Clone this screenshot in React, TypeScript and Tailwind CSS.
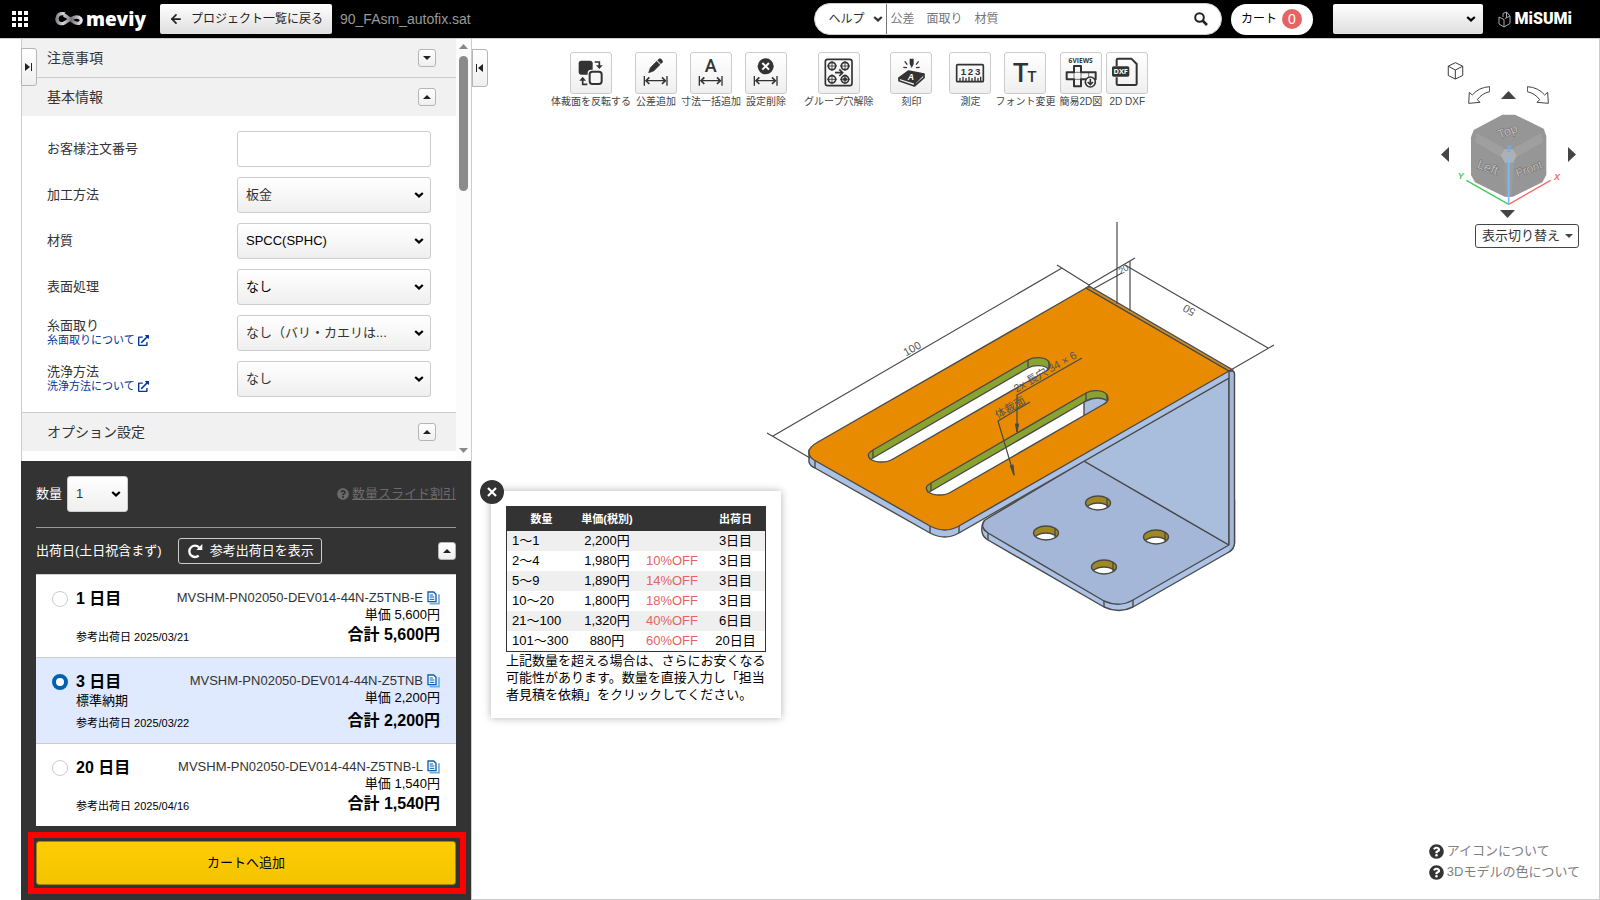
import React from 'react'
import { ArrowLeft } from 'lucide-react'
import { FaExternalLinkAlt, FaQuestionCircle } from 'react-icons/fa'

type IconProps = { className?: string }

const Chevron: React.FC<IconProps> = ({ className }) => (
  <svg viewBox="0 0 10 6" className={`h-[6px] w-[10px] pointer-events-none ${className ?? ''}`} aria-hidden="true">
    <path d="M1.2 1 5 4.4 8.8 1" fill="none" stroke="currentColor" strokeWidth="2.2" />
  </svg>
)

const ToggleButton: React.FC<{ open: boolean; label: string }> = ({ open, label }) => (
  <button
    aria-label={label}
    aria-expanded={open}
    className="flex h-[18px] w-[18px] items-center justify-center rounded-[3px] border border-[#b5b5b5] bg-linear-to-b from-white to-[#efefef]"
  >
    <svg viewBox="0 0 8 4" className="h-1 w-2">
      <path d={open ? 'M0 4 4 0 8 4Z' : 'M0 0 4 4 8 0Z'} fill="#222" />
    </svg>
  </button>
)

/* ---------- Header ---------- */

const MeviyLogo: React.FC = () => (
  <a href="#" className="flex w-[91px] items-center gap-[3px] text-white" aria-label="meviy">
    <svg viewBox="0 0 84 42" className="h-[14px] w-[28px]">
      <defs>
        <linearGradient id="mark" x1="0" x2="1" y1="0" y2="0">
          <stop offset="0" stopColor="#8b8790" />
          <stop offset="0.25" stopColor="#d8d6da" />
          <stop offset="0.6" stopColor="#77737c" />
          <stop offset="1" stopColor="#e8e6ea" />
        </linearGradient>
      </defs>
      <path
        d="M30 6C16 1 5 9 6 22C7 34 18 38 28 33C42 26 50 15 66 15C75 15 81 21 78 28C75 36 64 36 56 30C46 23 38 12 26 9"
        fill="none"
        stroke="url(#mark)"
        strokeWidth="10"
      />
    </svg>
    <span className="font-['Open_Sans'] text-[19px] leading-[24px] font-extrabold">meviy</span>
  </a>
)

const Header: React.FC = () => (
  <header className="flex h-[39px] shrink-0 items-center border-b border-[#ccc] bg-black pl-3 pr-7">
    <button aria-label="メニュー" className="mr-[27px] grid grid-cols-3 gap-[2px]">
      {Array.from({ length: 9 }, (_, i) => (
        <span key={i} className="h-[4px] w-[4px] bg-white" />
      ))}
    </button>
    <MeviyLogo />
    <button className="ml-[14px] flex h-[30px] w-[172px] items-center gap-2 rounded-[2px] bg-linear-to-b from-white to-[#dedede] pl-[9px] text-[12px] text-[#222]">
      <ArrowLeft className="h-[14px] w-[14px]" strokeWidth={3} />
      プロジェクト一覧に戻る
    </button>
    <span className="ml-2 text-[14px] text-[#999]">90_FAsm_autofix.sat</span>

    <div className="ml-auto flex items-center">
      <form className="flex h-8 w-[408px] items-center rounded-full border border-[#ccc] bg-white pr-[13px]">
        <button type="button" className="flex h-full w-[72px] items-center gap-[8px] border-r border-[#777] pl-[14px] text-[12px] text-[#333]">
          ヘルプ
          <Chevron />
        </button>
        <input
          aria-label="検索"
          placeholder="公差　面取り　材質"
          className="min-w-0 flex-1 pl-1 text-[12px] outline-none placeholder:text-[#757575]"
        />
        <button type="button" aria-label="検索する">
          <svg viewBox="0 0 14 14" className="h-[14px] w-[14px] text-[#222]" fill="none" stroke="currentColor">
            <circle cx="5.500" cy="5.500" r="4.300" strokeWidth="2" />
            <path d="M8.500 8.500 13 13" strokeWidth="2.600" />
          </svg>
        </button>
      </form>
      <a href="#" className="ml-[9px] flex h-[31px] w-[82px] items-center justify-center gap-[5px] rounded-full bg-white text-[12px] text-black">
        カート
        <span className="flex h-5 w-5 items-center justify-center rounded-full bg-[#e56363] text-[14px] text-white">0</span>
      </a>
      <div className="relative ml-5">
        <select
          aria-label="アカウント"
          className="h-[30px] w-[150px] appearance-none rounded-[2px] bg-linear-to-b from-white to-[#dedede]"
        />
        <Chevron className="absolute right-[7px] top-3 text-black" />
      </div>
      <a href="#" className="ml-[15px] flex items-center gap-1 text-white" aria-label="MiSUMi">
        <svg viewBox="0 0 26 34" className="h-[17px] w-[13px]" fill="none" stroke="#aaa" strokeWidth="2">
          <path d="M2 12 12 17V32L2 26ZM12 32 24 25V10L14 15M10 12V5L17 2V14M17 2 24 10" />
        </svg>
        <span className="font-[Roboto] text-[16px] leading-5 font-black">MiSUMi</span>
      </a>
    </div>
  </header>
)

/* ---------- Side panel ---------- */

const SectionHeader: React.FC<{ title: string; open: boolean }> = ({ title, open }) => (
  <div className="flex h-[38px] shrink-0 items-center justify-between bg-[#f1f1f1] pl-[25px] pr-5">
    <h2 className="text-[14px]">{title}</h2>
    <ToggleButton open={open} label={title} />
  </div>
)

const fields = [
  { id: 'method', label: '加工方法', value: '板金' },
  { id: 'material', label: '材質', value: 'SPCC(SPHC)', active: true },
  { id: 'surface', label: '表面処理', value: 'なし', active: true },
  { id: 'chamfer', label: '糸面取り', value: 'なし（バリ・カエリは...', link: '糸面取りについて' },
  { id: 'wash', label: '洗浄方法', value: 'なし', link: '洗浄方法について' },
]

const BasicInfo: React.FC = () => (
  <div className="flex flex-col gap-[10px] border-b border-[#ccc] py-[15px] pl-[25px] pr-[25px] text-[13px]">
    <div className="flex h-9 items-center justify-between">
      <label htmlFor="order-no">お客様注文番号</label>
      <input id="order-no" className="h-9 w-[194px] rounded-[3px] border border-[#ccc] px-2 outline-none" />
    </div>
    {fields.map((field) => (
      <div key={field.id} className="flex h-9 items-center justify-between">
        <div className="flex flex-col pb-[2px]">
          <label htmlFor={field.id} className="leading-[17px]">{field.label}</label>
          {field.link && (
            <a href="#" className="flex items-center gap-[3px] text-[11px] leading-[13px] text-[#00359c]">
              {field.link}
              <FaExternalLinkAlt className="h-[11px] w-[11px]" />
            </a>
          )}
        </div>
        <div className="relative">
          <select
            id={field.id}
            className={`h-9 w-[194px] appearance-none rounded-[3px] border border-[#ccc] bg-linear-to-b from-white to-[#efefef] pl-2 ${
              field.active ? 'text-black' : 'text-[#333]'
            }`}
          >
            <option>{field.value}</option>
          </select>
          <Chevron className="absolute right-[7px] top-[15px] text-black" />
        </div>
      </div>
    ))}
  </div>
)

const CopyIcon: React.FC = () => (
  <svg viewBox="0 0 39 42" className="h-[14px] w-[13px]" fill="none">
    <path d="M8 38H36V10" stroke="#7ba8d6" strokeWidth="5" />
    <path d="M3 3H20L27 10V32H3Z" fill="#fff" stroke="#0a5fb0" strokeWidth="4" />
    <path d="M8 12H18M8 18H22M8 25H22" stroke="#0a5fb0" strokeWidth="3" />
  </svg>
)

const plans = [
  { days: '1', code: 'MVSHM-PN02050-DEV014-44N-Z5TNB-E', price: '5,600', date: '2025/03/21' },
  { days: '3', code: 'MVSHM-PN02050-DEV014-44N-Z5TNB', price: '2,200', date: '2025/03/22', note: '標準納期' },
  { days: '20', code: 'MVSHM-PN02050-DEV014-44N-Z5TNB-L', price: '1,540', date: '2025/04/16' },
]

const OrderPanel: React.FC = () => (
  <div className="flex shrink-0 flex-col bg-[#333] px-[15px] pt-[15px] pb-[6px] text-[13px] text-white">
    <div className="flex items-center border-b border-[#999] pb-[15px]">
      <label htmlFor="qty" className="mr-[5px]">数量</label>
      <div className="relative">
        <select
          id="qty"
          className="h-9 w-[61px] appearance-none rounded-[3px] border border-[#ccc] bg-linear-to-b from-white to-[#efefef] pl-2 text-[#333]"
        >
          <option>1</option>
        </select>
        <Chevron className="absolute right-[7px] top-[15px] text-black" />
      </div>
      <a href="#" className="ml-auto flex items-center gap-[3px] text-[#6b6b6b]">
        <FaQuestionCircle className="h-3 w-3" />
        <span className="underline">数量スライド割引</span>
      </a>
    </div>

    <div className="flex items-center py-[10px]">
      <span>出荷日(土日祝含まず)</span>
      <button className="ml-4 flex h-[26px] w-[144px] items-center gap-[7px] rounded-[3px] border border-[#ccc] pl-2">
        <svg viewBox="0 0 48 48" className="h-4 w-4">
          <path d="M35 38A17 17 0 1 1 36 13" fill="none" stroke="#fff" strokeWidth="7" />
          <path d="M46 3V21H28Z" fill="#fff" />
        </svg>
        参考出荷日を表示
      </button>
      <div className="ml-auto flex">
        <ToggleButton open label="出荷日" />
      </div>
    </div>

    <div className="text-black">
      {plans.map((plan) => (
        <label
          key={plan.days}
          className="flex gap-2 border-t border-[#ccc] bg-white px-4 pt-[14px] pb-[11px] has-checked:bg-[#dfe9ff]"
        >
          <input
            type="radio"
            name="plan"
            defaultChecked={plan.days === '3'}
            className="mt-0.5 h-4 w-4 shrink-0 appearance-none rounded-full border border-[#ccc] bg-white checked:border-4 checked:border-[#0062b1]"
          />
          <span className="flex min-w-0 flex-1 flex-col whitespace-nowrap">
            <b className="text-[16px] leading-5">{plan.days} 日目</b>
            {plan.note && <span className="mb-[6px] leading-[17px]">{plan.note}</span>}
            <span className="mt-auto text-[11px] leading-[17px]">参考出荷日 {plan.date}</span>
          </span>
          <span className="flex flex-col items-end">
            <span className="flex items-center gap-1 leading-[17px] text-[#333]">
              {plan.code}
              <CopyIcon />
            </span>
            <span className="leading-[17px]">単価 {plan.price}円</span>
            <b className="mt-auto pt-px text-[16px] leading-[22px]">合計 {plan.price}円</b>
          </span>
        </label>
      ))}
    </div>

    <div className="-mr-[10px] -ml-2 mt-[6px] border-6 border-[#f00] py-[3px] pr-1 pl-[2px]">
      <button className="h-11 w-full rounded-[3px] border border-[#a48300] bg-linear-to-b from-[#ffcd05] to-[#f4c300] text-[13px] text-black">
        カートへ追加
      </button>
    </div>
  </div>
)

const Scrollbar: React.FC = () => (
  <div className="flex w-[15px] shrink-0 flex-col items-center bg-[#fbfbfb] pt-[5px] pb-2">
    <svg viewBox="0 0 9 5" className="mb-[7px] h-[5px] w-[9px]">
      <path d="M0 5 4.5 0 9 5Z" fill="#888" />
    </svg>
    <div className="h-[135px] w-[9px] rounded-full bg-[#8b8b8b]" />
    <svg viewBox="0 0 9 5" className="mt-auto h-[5px] w-[9px]">
      <path d="M0 0 4.5 5 9 0Z" fill="#888" />
    </svg>
  </div>
)

/* ---------- Quantity discount popup ---------- */

const discounts = [
  ['1～1', '2,200円', '', '3日目'],
  ['2～4', '1,980円', '10%OFF', '3日目'],
  ['5～9', '1,890円', '14%OFF', '3日目'],
  ['10～20', '1,800円', '18%OFF', '3日目'],
  ['21～100', '1,320円', '40%OFF', '6日目'],
  ['101～300', '880円', '60%OFF', '20日目'],
]

const DiscountPopup: React.FC = () => (
  <div className="absolute left-[19px] top-[452px] z-10 w-[290px] bg-white p-[15px] text-[13px] text-black shadow-[0_0_8px_rgba(0,0,0,0.3)]">
    <button
      aria-label="閉じる"
      className="absolute -left-[11px] -top-[11px] flex h-6 w-6 items-center justify-center rounded-full bg-[#333]"
    >
      <svg viewBox="0 0 10 10" className="h-[10px] w-[10px]">
        <path d="M1 1 9 9M9 1 1 9" stroke="#fff" strokeWidth="2.2" />
      </svg>
    </button>
    <table className="w-full table-fixed border-separate border-spacing-0 border border-[#333]">
      <colgroup>
        <col className="w-[69px]" />
        <col className="w-[62px]" />
        <col className="w-[68px]" />
        <col className="w-[59px]" />
      </colgroup>
      <thead>
        <tr className="h-6 bg-[#333] text-[11px] text-white">
          <th className="p-0">数量</th>
          <th className="p-0 whitespace-nowrap">単価(税別)</th>
          <th className="p-0" />
          <th className="p-0">出荷日</th>
        </tr>
      </thead>
      <tbody>
        {discounts.map((row) => (
          <tr key={row[0]} className="h-5 leading-[18px] odd:bg-[#efefef]">
            <td className="p-0 pl-[5px] whitespace-nowrap">{row[0]}</td>
            <td className="p-0 text-center">{row[1]}</td>
            <td className="p-0 text-center text-[#e56363]">{row[2]}</td>
            <td className="p-0 text-center">{row[3]}</td>
          </tr>
        ))}
      </tbody>
    </table>
    <p className="leading-[17px]">
      上記数量を超える場合は、さらにお安くなる可能性があります。数量を直接入力し「担当者見積を依頼」をクリックしてください。
    </p>
  </div>
)

/* ---------- Toolbar ---------- */

const dimension = (
  <g stroke="#333" strokeWidth="4" fill="none">
    <path d="M28 72V101M96 72V101M33 86H91" />
    <path d="M43 76 33 86 43 96M81 76 91 86 81 96" strokeWidth="5" />
  </g>
)

const icons: Record<string, React.ReactNode> = {
  flip: (
    <>
      <rect x="26" y="26" width="42" height="42" rx="8" fill="#333" />
      <rect x="53" y="53" width="48" height="48" rx="10" fill="#f7f7f7" />
      <rect x="59" y="59" width="36" height="37" rx="8" fill="none" stroke="#333" strokeWidth="6" />
      <path d="M74 30H88V44M52 97H38V82" fill="none" stroke="#333" strokeWidth="5" />
      <path d="M78 40H98L88 51ZM28 86H48L38 74Z" fill="#333" />
    </>
  ),
  pencil: (
    <>
      <path d="M41 62 46 47 65 28 75 38 56 57ZM68 25 72 21Q76 19 80 23Q84 28 82 31L78 35Z" fill="#333" stroke="#333" strokeWidth="2" />
      {dimension}
    </>
  ),
  letter: (
    <>
      <text x="62" y="61" textAnchor="middle" fontSize="54" fontFamily="Roboto" fontWeight="500" fill="#333">A</text>
      {dimension}
    </>
  ),
  remove: (
    <>
      <circle cx="62" cy="43" r="24" fill="#333" />
      <path d="M52 33 72 53M72 33 52 53" stroke="#fff" strokeWidth="6" />
      {dimension}
    </>
  ),
  group: (
    <g fill="none" stroke="#333" strokeWidth="5">
      <rect x="22" y="22" width="80" height="79" rx="7" />
      {[[42, 42], [81, 42], [42, 82], [81, 82]].map(([x, y]) => (
        <g key={`${x}-${y}`}>
          <circle cx={x} cy={y} r="11" />
          <path d={`M${x - 15} ${y}H${x + 15}M${x} ${y - 15}V${y + 15}`} strokeWidth="2.5" />
        </g>
      ))}
      <circle cx="81" cy="82" r="6" fill="#333" stroke="none" />
      <path d="M51 62H72M64 52 74 62 64 72" />
    </g>
  ),
  engrave: (
    <>
      <path d="M27 78 56 57 102 66 75 93Z" fill="#333" stroke="#333" strokeWidth="5" strokeLinejoin="round" />
      <path d="M27 78V86L73 102 102 77V67M75 93 73 101" fill="none" stroke="#333" strokeWidth="5" strokeLinejoin="round" />
      <text x="63" y="84" textAnchor="middle" fontSize="26" fontWeight="700" fontStyle="italic" fontFamily="Liberation Sans" fill="#fff">A</text>
      <path d="M59 20H71V36L65 48 59 36Z" fill="#333" />
      <path d="M44 28 52 38M40 46 51 47M86 28 78 38M89 46 78 47" stroke="#333" strokeWidth="4" />
    </>
  ),
  ruler: (
    <>
      <rect x="23" y="38" width="80" height="51" rx="3" fill="none" stroke="#333" strokeWidth="5" />
      <g fontSize="29" fontWeight="700" fontFamily="Liberation Sans" textAnchor="middle" fill="#333">
        <text x="43" y="68">1</text>
        <text x="64" y="68">2</text>
        <text x="86" y="68">3</text>
      </g>
      <path d="M33 87V78M42 87V74M51 87V78M60 87V74M69 87V78M78 87V74M87 87V78M95 87V74" stroke="#333" strokeWidth="4" />
    </>
  ),
  font: (
    <g fill="#333" fontFamily="Roboto" fontWeight="500" textAnchor="middle">
      <text x="50" y="91" fontSize="78">T</text>
      <text x="84" y="91" fontSize="46">T</text>
    </g>
  ),
  views: (
    <>
      <text x="62" y="32" textAnchor="middle" fontSize="20" fontWeight="700" fontFamily="Open Sans" fill="#333">6VIEWS</text>
      <path d="M42 42H63V61H107V82H63V103H42V82H20V61H42Z" fill="none" stroke="#333" strokeWidth="6" strokeLinejoin="round" />
      <path d="M42 61H63V82H42ZM86 61V82" fill="none" stroke="#333" strokeWidth="2" />
      <circle cx="91" cy="90" r="15" fill="#fafafa" stroke="#333" strokeWidth="5" />
      <path d="M91 80V96M83 90 91 98 99 90" fill="none" stroke="#333" strokeWidth="5" />
    </>
  ),
  dxf: (
    <>
      <path d="M32 42V24Q32 20 36 20H76L92 36V95Q92 99 88 99H36Q32 99 32 95V76" fill="none" stroke="#333" strokeWidth="6" />
      <rect x="18" y="43" width="52" height="31" rx="5" fill="#333" />
      <text x="44" y="67" textAnchor="middle" fontSize="22" fontWeight="700" fontFamily="Open Sans" fill="#fff">DXF</text>
    </>
  ),
}

const toolGroups = [
  [
    { icon: 'flip', label: '体裁面を反転する' },
    { icon: 'pencil', label: '公差追加' },
    { icon: 'letter', label: '寸法一括追加' },
    { icon: 'remove', label: '設定削除' },
  ],
  [{ icon: 'group', label: 'グループ穴解除' }],
  [{ icon: 'engrave', label: '刻印' }],
  [
    { icon: 'ruler', label: '測定' },
    { icon: 'font', label: 'フォント変更' },
    { icon: 'views', label: '簡易2D図' },
    { icon: 'dxf', label: '2D DXF' },
  ],
]

const Toolbar: React.FC = () => (
  <div className="flex gap-[17px] pt-[13px]">
    {toolGroups.map((group) => (
      <div key={group[0].icon} className="flex gap-1">
        {group.map((tool) => (
          <button key={tool.icon} className="flex flex-col items-center text-[10px] leading-[15px] whitespace-nowrap text-[#444]">
            <span className="rounded-[3px] border border-[#ccc] bg-linear-to-b from-white to-[#efefef]">
              <svg viewBox="3 3 120 120" className="h-10 w-10">{icons[tool.icon]}</svg>
            </span>
            {tool.label}
          </button>
        ))}
      </div>
    ))}
  </div>
)

/* ---------- View cube ---------- */

const CurvedArrow: React.FC<IconProps> = ({ className }) => (
  <svg viewBox="0 0 66 54" className={`h-[18px] w-[22px] ${className ?? ''}`}>
    <path d="M65 2V17Q42 22 28 41L36 49 2 52 4 19 13 27Q32 4 65 2Z" fill="#fff" stroke="#444" strokeWidth="3" />
  </svg>
)

const ViewCube: React.FC = () => (
  <div className="flex w-[138px] flex-col pt-[23px]">
    <button aria-label="ホーム表示" className="ml-[6px] self-start">
      <svg viewBox="0 0 51 56" className="h-[18px] w-[17px]" fill="none" stroke="#333" strokeWidth="3" strokeLinejoin="round">
        <path d="M25 2 48 13V42L25 53 3 42V13ZM3 13 25 25 48 13M25 25V53" />
      </svg>
    </button>
    <div className="mt-[6px] flex items-center justify-center gap-[11px] pr-1">
      <button aria-label="左に回転"><CurvedArrow /></button>
      <button aria-label="上へ">
        <svg viewBox="0 0 15 8" className="h-2 w-[15px]"><path d="M0 8 7.5 0 15 8Z" fill="#444" /></svg>
      </button>
      <button aria-label="右に回転"><CurvedArrow className="-scale-x-100" /></button>
    </div>
    <div className="mt-[9px] flex items-start justify-between pr-[3px]">
      <button aria-label="左へ" className="pt-[34px]">
        <svg viewBox="0 0 8 15" className="h-[15px] w-2"><path d="M8 0V15L0 7.5Z" fill="#444" /></svg>
      </button>
      <svg viewBox="172 189 312 279" className="h-[93px] w-[104px]">
        <path d="M308 194H346L432 236 440 258V375L428 397 340 440H315L226 397 214 375V262L222 240Z" fill="#969696" />
        <path d="M232 250 308 292 318 304 304 322 226 276ZM424 250 346 292 338 304 350 322 430 276Z" fill="#9f9f9f" />
        <path d="M314 334H342L336 440H318Z" fill="#9c9c9c" />
        <path d="M304 317 314 298H340L351 317 340 338H316Z" fill="#adb1b6" />
        <g fontFamily="Liberation Sans" fontSize="38" textAnchor="middle" fill="#bdbdbd" stroke="#707070" strokeWidth="3" paintOrder="stroke">
          <text transform="translate(328 256) rotate(-22)">Top</text>
          <text transform="translate(260 364) rotate(20)">Left</text>
          <text transform="translate(392 368) rotate(-20)" fontSize="35">Front</text>
        </g>
        <path d="M200 391 327 463" stroke="#3fce5c" strokeWidth="4" />
        <path d="M327 463 453 391" stroke="#f76a6a" strokeWidth="4" />
        <path d="M327 463V318" stroke="#7cbcf5" strokeWidth="5" />
        <g fontFamily="Liberation Sans" fontSize="27" fontStyle="italic" fontWeight="700" textAnchor="middle">
          <text x="183" y="388" fill="#3fce5c">Y</text>
          <text x="472" y="390" fill="#f76a6a">X</text>
          <text x="328" y="306" fill="#6fb1f0">Z</text>
        </g>
      </svg>
      <button aria-label="右へ" className="pt-[34px]">
        <svg viewBox="0 0 8 15" className="h-[15px] w-2"><path d="M0 0V15L8 7.5Z" fill="#444" /></svg>
      </button>
    </div>
    <button aria-label="下へ" className="mt-1 flex justify-center pr-[5px]">
      <svg viewBox="0 0 15 8" className="h-2 w-[15px]"><path d="M0 0 7.5 8 15 0Z" fill="#444" /></svg>
    </button>
    <button className="mt-[6px] flex h-6 w-[104px] items-center justify-between self-end rounded-[3px] border border-[#444] bg-white pr-[5px] pl-[6px] text-[13px] whitespace-nowrap">
      表示切り替え
      <svg viewBox="0 0 8 4" className="h-1 w-2"><path d="M0 0 4 4 8 0Z" fill="#444" /></svg>
    </button>
  </div>
)

/* ---------- 3D model ---------- */

const slot =
  'M873 450 1028 360C1033 357 1045 356 1049 362C1051 366 1050 369 1046 371L893 459C887 463 876 463 870 459C867 455 868 453 873 450Z'

const holes = [[1098, 503], [1046, 533], [1156, 537], [1104, 567]]

const Model: React.FC = () => (
  <svg
    viewBox="760 215 520 405"
    className="absolute left-[288px] top-[176px] h-[405px] w-[520px]"
    fill="none"
    stroke="#4a4a4a"
    strokeWidth="1.4"
    strokeLinejoin="round"
  >
    <defs>
      <clipPath id="slot"><path d={slot} /></clipPath>
      <clipPath id="hole"><ellipse cx="0" cy="0" rx="12.5" ry="7" /></clipPath>
    </defs>

    {/* lower plate */}
    <path d="M984 521Q981 525 982 532Q983 537 988 540L1104 607Q1119 614 1133 607L1229 552Q1234 549 1234.500 543V500L1084 461Z" fill="#adc3e5" />
    <path d="M985 520Q979 527 988 533L1104 601Q1119 608 1133 600L1229 545 1084 461Z" fill="#a5b7d8" />
    <path d="M988 533V540M1104 601V607M1133 600V607" />

    {/* vertical wall */}
    <path d="M1084 461 1229 378V545Z" fill="#a9bedd" />
    <path d="M1229 371H1232Q1234.500 371 1234.500 374V543Q1234 549 1229 552V378Z" fill="#a5b7d8" stroke="none" />
    <path d="M1229 371H1232Q1234.500 371 1234.500 374V543Q1234 549 1229 552M1229 378V545" />

    {holes.map(([x, y]) => (
      <g key={x} transform={`translate(${x} ${y})`}>
        <ellipse rx="12.5" ry="7" fill="#a08a20" stroke="none" />
        <g clipPath="url(#hole)">
          <ellipse cy="7" rx="12.5" ry="7" fill="#fff" />
          <path d="M9 -6V4" />
        </g>
        <ellipse rx="12.5" ry="7" />
      </g>
    ))}

    {/* upper plate */}
    <path d="M809 450V462Q810 466 815 468L930 533Q945 541 959 533L1229 378V371L930 400Z" fill="#abc1e4" />
    <path d="M1086 288 818 442Q809 447 809 452Q809 457 814 460L930 526Q945 534 959 526L1229 371Z" fill="#e88b00" />
    <path d="M1086 288 1089 286 1233 370 1229 371Z" fill="#c98a2c" />
    <path d="M815 460V468M930 526V533M959 526V533" />

    {[0, 1].map((i) => (
      <g key={i} transform={`translate(${i * 58} ${i * 33})`}>
        <path d={slot} fill="#8aa32f" stroke="none" />
        <g clipPath="url(#slot)">
          <path d={slot} transform="translate(0 8)" fill="#fff" />
          {i === 1 && <path d="M1026 369 1028 368Q1040 362 1050 368V374L1026 385Z" fill="#a9bedd" />}
          <path d="M873 450V458M1028 358V367M1049 361V368" />
        </g>
        <path d={slot} />
      </g>
    ))}

    {/* dimension lines */}
    <g strokeWidth="1.2">
      <path d="M773 436 1062 268M767 433 810 458M1057 265 1089 285V288" />
      <path d="M1125 265 1268 348M1274 345 1229 371" />
      <path d="M1089 285 1135 258M1093 289 1122 273M1117 222V304M1130 261V311" />
      <path d="M1082 358 1017 395V432M1030 402 998 421 1014 475" />
      <path d="M1015.500 424 1017 432 1018.500 424ZM1010.500 466 1014 475 1013 465Z" fill="#4a4a4a" />
    </g>
    <g fill="#555" stroke="none" fontSize="11" textAnchor="middle" fontFamily="Liberation Sans, Noto Sans CJK JP, sans-serif">
      <text transform="translate(914 352) rotate(-30)">100</text>
      <text transform="translate(1191 307) rotate(210)">50</text>
      <text transform="translate(1125 272) rotate(-30)" fontSize="9">20</text>
      <text transform="translate(1047 375) rotate(-30)">2x 長穴 34 × 6</text>
      <text transform="translate(1012 411) rotate(-30)">体裁面</text>
    </g>
  </svg>
)

const App: React.FC = () => (
  <div className="flex h-screen flex-col bg-white font-['Liberation_Sans','Noto_Sans_CJK_JP',sans-serif] text-[#333]">
    <Header />
    <div className="flex min-h-0 flex-1 pl-[21px]">
      <aside className="relative flex w-[451px] shrink-0 flex-col border-r border-[#ccc]">
        <button
          aria-label="パネルを展開"
          className="absolute left-0 top-[9px] z-10 flex h-[38px] w-4 items-center justify-center rounded-r-[3px] border border-[#b5b5b5] bg-linear-to-b from-white to-[#efefef]"
        >
          <svg viewBox="0 0 8 8" className="h-2 w-2"><path d="M0 0 5 4 0 8ZM6 0H7V8H6Z" fill="#222" /></svg>
        </button>
        <div className="flex min-h-0 flex-1 border-l border-[#ccc]">
          <div className="min-w-0 flex-1 overflow-hidden">
            <SectionHeader title="注意事項" open={false} />
            <div className="border-t border-[#ccc]">
              <SectionHeader title="基本情報" open />
            </div>
            <BasicInfo />
            <SectionHeader title="オプション設定" open />
          </div>
          <Scrollbar />
        </div>
        <OrderPanel />
      </aside>

      <main className="relative flex min-w-0 flex-1 items-start border-r border-b border-[#ccc] pr-5">
        <Model />
        <button
          aria-label="パネルを閉じる"
          className="mt-[10px] mr-[63px] flex h-[38px] w-4 shrink-0 items-center justify-center rounded-r-[3px] border border-[#b5b5b5] bg-linear-to-b from-white to-[#efefef]"
        >
          <svg viewBox="0 0 8 8" className="h-2 w-2"><path d="M7 0 2 4 7 8ZM0 0H1V8H0Z" fill="#222" /></svg>
        </button>
        <Toolbar />
        <div className="relative ml-auto">
          <ViewCube />
        </div>
        <DiscountPopup />
        <nav className="absolute right-[19px] bottom-[17px] flex flex-col gap-[1px] text-[13px] leading-5 text-[#808080]">
          <a href="#" className="flex items-center gap-[3px]">
            <FaQuestionCircle className="h-[15px] w-[15px] text-[#333]" />
            アイコンについて
          </a>
          <a href="#" className="flex items-center gap-[3px]">
            <FaQuestionCircle className="h-[15px] w-[15px] text-[#333]" />
            3Dモデルの色について
          </a>
        </nav>
      </main>
    </div>
  </div>
)

export default App
